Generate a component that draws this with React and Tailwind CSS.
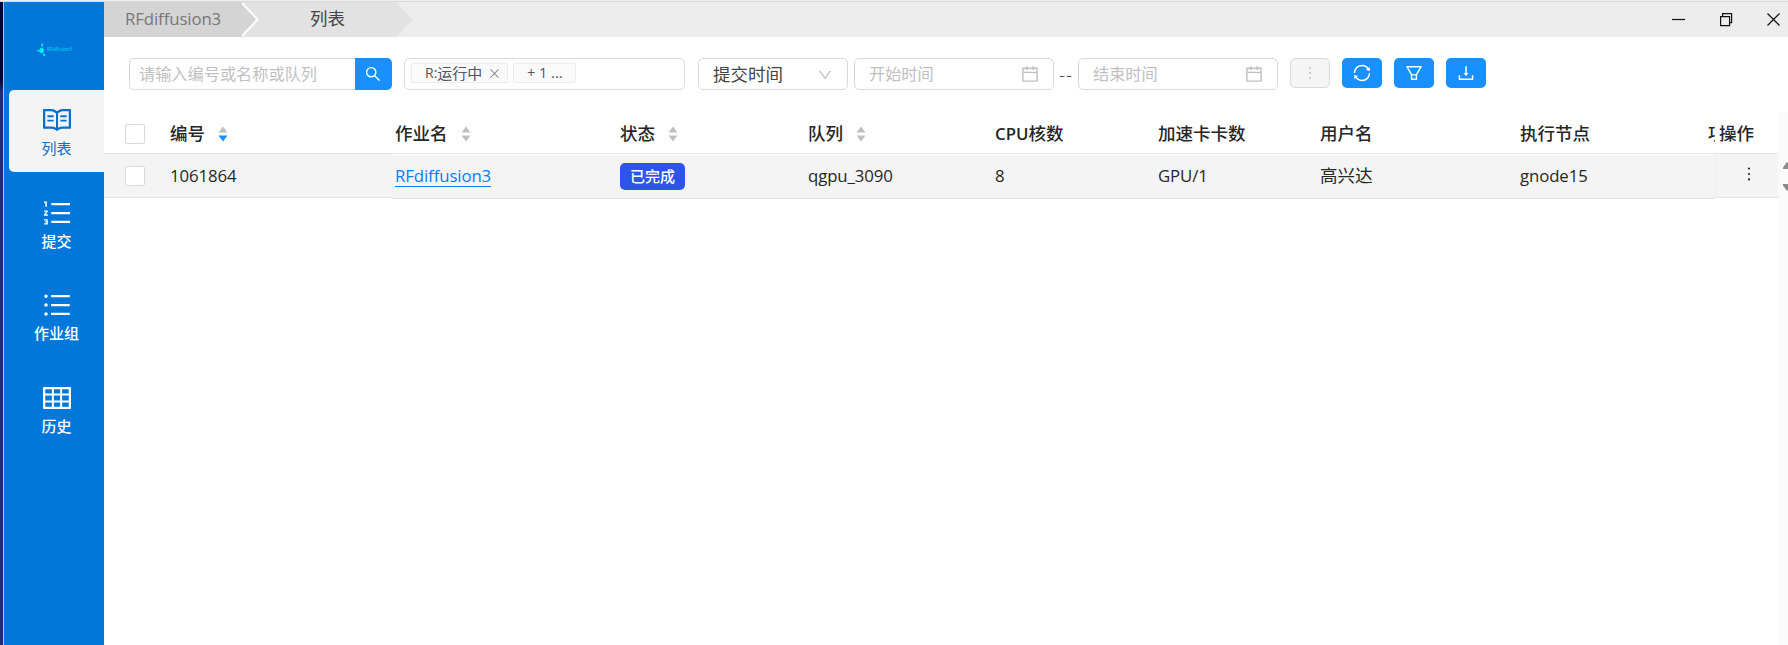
import React from "react";
import {
  AiOutlineRead,
  AiOutlineOrderedList,
  AiOutlineUnorderedList,
  AiOutlineTable,
  AiOutlineSearch,
  AiOutlineClose,
  AiOutlineDown,
  AiOutlineCalendar,
  AiOutlineSync,
  AiOutlineFilter,
  AiOutlineDownload,
  AiOutlineMore,
} from "react-icons/ai";

const menu = [
  { label: "列表", icon: <AiOutlineRead />, active: true },
  { label: "提交", icon: <AiOutlineOrderedList /> },
  { label: "作业组", icon: <AiOutlineUnorderedList /> },
  { label: "历史", icon: <AiOutlineTable /> },
];

const columns = [
  { title: "作业名", width: "w-[225px]", sort: true },
  { title: "状态", width: "w-[188px]", sort: true },
  { title: "队列", width: "w-[187px]", sort: true },
  { latin: "CPU", title: "核数", width: "w-[163px]" },
  { title: "加速卡卡数", width: "w-[162px]" },
  { title: "用户名", width: "w-[200px]" },
  { title: "执行节点", width: "w-[188px]" },
  { title: "项", width: "w-[60px]" },
];

// Latin text is set a little smaller than the Chinese around it
function Latin({ children }) {
  return <span className="text-[16.8px] tracking-[-0.1px]">{children}</span>;
}

function Sorter({ desc }) {
  return (
    <svg width="10" height="16" viewBox="0 0 10 16" className="shrink-0">
      <path d="M5 0.5 9.5 6.5H0.5Z" fill="#bfbfbf" />
      <path d="M5 15.5 9.5 9.5H0.5Z" fill={desc ? "#1890ff" : "#bfbfbf"} />
    </svg>
  );
}

function Logo() {
  return (
    <div className="flex h-[88px] items-center pl-[33px] pt-[7px]">
      <svg width="9" height="14" viewBox="0 0 9 14" fill="#00eeff">
        <ellipse cx="4.7" cy="7.5" rx="2.2" ry="2.8" />
        <circle cx="5.2" cy="1.7" r="1.1" />
        <circle cx="1.2" cy="7.8" r="1" />
        <circle cx="7.2" cy="12" r="1.1" />
        <path d="M5.2 2v4M1.2 7.8h3M5 8.5l2.2 3.5" stroke="#00eeff" strokeWidth="0.7" />
      </svg>
      <span className="ml-px text-[5px] leading-none tracking-[-0.35px] text-[#00d4f5]">
        RFdiffusion3
      </span>
    </div>
  );
}

function Sidebar() {
  return (
    <aside className="flex w-[100px] shrink-0 flex-col bg-[#0077d9]">
      <Logo />
      <nav className="flex flex-col gap-[10.5px] pl-[5px]">
        {menu.map((item) => (
          <div
            key={item.label}
            className={
              item.active
                ? "flex h-[82px] flex-col items-center rounded-l-[5px] bg-[#f4f4f4] pt-[14px] text-[#0a6fc8]"
                : "flex h-[82px] flex-col items-center pt-[14px] font-medium text-white"
            }
          >
            <span className="text-[32px]">{item.icon}</span>
            <span className="mt-px text-[15px] leading-[23px]">{item.label}</span>
          </div>
        ))}
      </nav>
    </aside>
  );
}

function TitleBar() {
  return (
    <header className="flex h-[35px] items-center justify-between bg-[#ededed]">
      <div className="flex h-full">
        <div className="flex h-full w-[138px] items-center bg-[#d4d4d4] pb-[2px] pl-[21px] text-[#777]">
          <Latin>RFdiffusion3</Latin>
        </div>
        <div className="flex h-full w-[154px] items-center bg-[#e2e2e2]">
          <svg width="17" height="35" viewBox="0 0 17 35">
            <path d="M0 0 16 17.500 0 35Z" fill="#d4d4d4" />
            <path d="M0 1 15.500 17.500 0 34" fill="none" stroke="#fff" strokeWidth="2" />
          </svg>
          <span className="mb-[2px] ml-[51px] text-[17.5px] text-[#444]">列表</span>
        </div>
        <svg width="17" height="35" viewBox="0 0 17 35">
          <path d="M0 0 17 17.500 0 35Z" fill="#e2e2e2" />
        </svg>
      </div>
      <svg width="120" height="35" viewBox="0 0 120 35" fill="none" stroke="#111" strokeWidth="1.2">
        <path d="M4 17.500H17" />
        <path d="M52.600 14.600h9v9h-9zM54.600 14.600v-3h9v9h-2" />
        <path d="M99.500 11.500 111.500 23.500M111.500 11.500 99.500 23.500" />
      </svg>
    </header>
  );
}

function DateInput({ placeholder }) {
  return (
    <div className="flex h-8 w-[200px] items-center justify-between rounded-[5px] border border-[#d9d9d9] pr-[13px] pl-[14px] text-[16.2px] text-[#bfbfbf]">
      {placeholder}
      <AiOutlineCalendar className="text-[20px]" />
    </div>
  );
}

function Toolbar() {
  const blueButton =
    "flex h-[30px] w-10 items-center justify-center rounded-[5px] bg-[#1890ff] text-[20px] text-white";
  return (
    <div className="flex h-[75px] items-start pt-[21px] pl-[25px]">
      <div className="flex h-8 w-[263px]">
        <div className="flex w-[226px] items-center rounded-l-[5px] border border-r-0 border-[#d9d9d9] pt-px pl-[9px] text-[16.2px] text-[#bfbfbf]">
          请输入编号或名称或队列
        </div>
        <button className="flex w-[37px] items-center justify-center rounded-r-[5px] bg-[#1890ff] pr-px text-[18px] text-white">
          <AiOutlineSearch />
        </button>
      </div>
      <div className="ml-3 flex h-8 w-[281px] gap-[5px] rounded-[5px] border border-[#d9d9d9] px-[6px] pt-1 text-[15px] text-[#555]">
        <span className="flex h-5 w-[97px] items-center rounded-[2px] border border-[#ebebeb] bg-[#fafafa] pl-[13px] leading-none">
          <span className="text-[14px]">R:</span>运行中
          <AiOutlineClose className="ml-[6px] text-[13px] text-[#8c8c8c]" />
        </span>
        <span className="flex h-5 w-[63px] items-center rounded-[2px] border border-[#ebebeb] bg-[#fafafa] pl-[13px] text-[14.5px] leading-none">
          + 1 ...
        </span>
      </div>
      <div className="ml-[13px] flex h-8 w-[150px] items-center justify-between rounded-[5px] border border-[#d9d9d9] pt-px pr-[14px] pl-[14px] text-[17.5px] text-[#444]">
        提交时间
        <AiOutlineDown className="text-[16px] text-[#bfbfbf]" />
      </div>
      <div className="ml-[6px] flex h-8 items-center">
        <DateInput placeholder="开始时间" />
        <span className="w-6 pt-[2px] text-center text-[19px] font-light tracking-[1px] text-[#444]">--</span>
        <DateInput placeholder="结束时间" />
      </div>
      <div className="ml-3 flex gap-3">
        <button className="flex h-[30px] w-10 items-center justify-center rounded-[5px] border border-[#d9d9d9] bg-[#f5f5f5] text-[18px] text-[#bfbfbf]">
          <AiOutlineMore />
        </button>
        <button className={blueButton}>
          <AiOutlineSync />
        </button>
        <button className={blueButton}>
          <AiOutlineFilter />
        </button>
        <button className={blueButton}>
          <AiOutlineDownload />
        </button>
      </div>
    </div>
  );
}

function Checkbox() {
  return <span className="size-5 shrink-0 rounded-[2px] border border-[#d9d9d9] bg-white" />;
}

function JobTable() {
  return (
    <div className="flex flex-1 items-start text-[17.5px] text-[#262626]">
      {/* fixed left columns */}
      <div className="w-[288px] shrink-0">
        <div className="flex h-[42px] items-center border-b border-[#e4e4e4] pt-[3px] pl-[21px] font-medium">
          <Checkbox />
          <span className="ml-[25px] mr-[13px] pb-[2px]">编号</span>
          <Sorter desc />
        </div>
        <div className="flex h-11 items-center border-b border-[#e4e4e4] bg-[#f4f4f4] pl-[21px]">
          <Checkbox />
          <span className="ml-[25px]">
            <Latin>1061864</Latin>
          </span>
        </div>
      </div>
      {/* scrolling columns */}
      <div className="w-[1323px] shrink-0 overflow-hidden">
        <div className="flex h-[42px] items-center border-b border-[#e4e4e4] pt-[3px] pl-[3px] font-medium whitespace-nowrap">
          {columns.map((col) => (
            <div key={col.title} className={"flex shrink-0 items-center gap-[13px] " + col.width}>
              <span className="pb-[2px]">
                {col.latin && <span className="text-[16.8px] font-semibold">{col.latin}</span>}
                {col.title}
              </span>
              {col.sort && <Sorter />}
            </div>
          ))}
        </div>
        <div className="mt-px flex h-11 items-center border-b border-[#e4e4e4] bg-[#f4f4f4] pb-px pl-[3px]">
          <div className="w-[225px] shrink-0 pb-[2px]">
            <a className="inline-block border-b border-[#0a7cf5] leading-[21px] text-[#0a7cf5]">
              <Latin>RFdiffusion3</Latin>
            </a>
          </div>
          <div className="w-[188px] shrink-0">
            <span className="flex h-[27px] w-[65px] items-center justify-center rounded-[5px] bg-[#2f54eb] text-[15px] font-medium text-white">
              已完成
            </span>
          </div>
          <div className="w-[187px] shrink-0 pb-px">
            <Latin>qgpu_3090</Latin>
          </div>
          <div className="w-[163px] shrink-0 pb-px">
            <Latin>8</Latin>
          </div>
          <div className="w-[162px] shrink-0 pb-px">
            <Latin>GPU/1</Latin>
          </div>
          <div className="w-[200px] shrink-0 pb-px">高兴达</div>
          <div className="shrink-0 pb-px">
            <Latin>gnode15</Latin>
          </div>
        </div>
      </div>
      {/* fixed actions */}
      <div className="w-[63px] shrink-0">
        <div className="flex h-[42px] items-center border-b border-[#e4e4e4] pt-px pl-1 font-medium">
          操作
        </div>
        <div className="flex h-11 items-center border-b border-l border-[#e4e4e4] border-l-[#eeeeee] bg-[#f4f4f4] pl-[23px]">
          <AiOutlineMore className="mb-[3px] text-[20px]" />
        </div>
      </div>
      <div className="w-[10px] shrink-0 self-stretch bg-[#fafafa] pt-[50px]">
        <svg width="10" height="30" viewBox="0 0 10 30" fill="#8c8c8c">
          <path d="M5 7V5.500L8.500 0.500H10V7Z" />
          <path d="M5 22V23.500L8.500 28.500H10V22Z" />
        </svg>
      </div>
    </div>
  );
}

function App() {
  return (
    <div className="flex h-[645px] w-[1788px] flex-col overflow-hidden bg-white font-['Open_Sans','Noto_Sans_CJK_SC',sans-serif]">
      <div className="h-[2px] shrink-0 border-b border-[#d9d9d9] bg-[#efefef]" />
      <div className="flex flex-1">
        <div className="w-1 shrink-0 border-r border-[#a9c4ea] bg-linear-to-b from-[#05003f] from-12% to-[#1b2f7a] to-14%" />
        <Sidebar />
        <main className="flex flex-1 flex-col">
          <TitleBar />
          <Toolbar />
          <JobTable />
        </main>
      </div>
    </div>
  );
}

export default App;
